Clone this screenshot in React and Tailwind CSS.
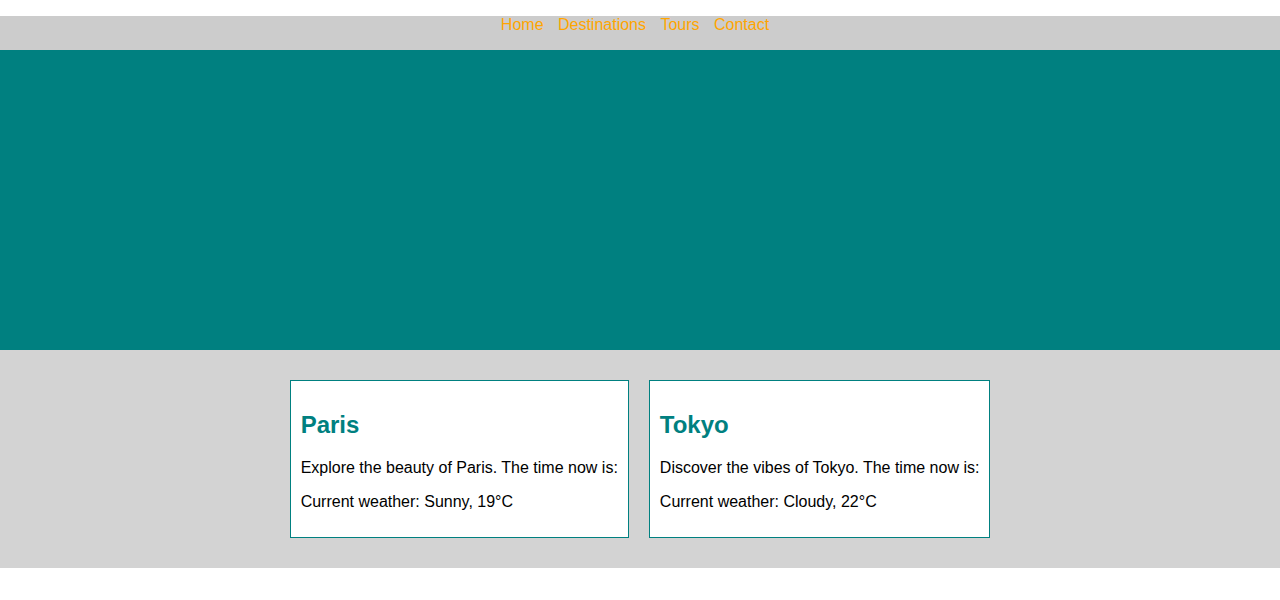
export default function App() {
  const links = ["Home", "Destinations", "Tours", "Contact"];
  const cards = [
    { city: "Paris", text: "Explore the beauty of Paris. The time now is:", weather: "Current weather: Sunny, 19°C" },
    { city: "Tokyo", text: "Discover the vibes of Tokyo. The time now is:", weather: "Current weather: Cloudy, 22°C" },
  ];
  return (
    <div className="bg-white min-h-[600px] text-black" style={{ fontFamily: '"Liberation Sans", Arial, sans-serif' }}>
      <header className="pt-4">
        <nav className="bg-[#cccccc] h-[34px]">
          <ul className="flex justify-center gap-[4.45px] text-[16px] leading-[18.4px]">
            {links.map((l) => (
              <li key={l} className="mr-[10px]">
                <a className="text-[#ffa500]" href="#">{l}</a>
              </li>
            ))}
          </ul>
        </nav>
      </header>
      <div className="bg-[#008080] h-[300px]" />
      <section className="bg-[#d3d3d3] p-[30px] flex justify-center items-start gap-5">
        {cards.map((c) => (
          <div key={c.city} className="bg-white border border-[#008080] p-[10px]">
            <h2 className="text-[24px] leading-[27.6px] font-bold text-[#008080] mt-[19.92px] mb-[20.9px]">{c.city}</h2>
            <p className="text-[16px] leading-[18.4px] mb-[15px]">{c.text}</p>
            <p className="text-[16px] leading-[18.4px] mb-4">{c.weather}</p>
          </div>
        ))}
      </section>
    </div>
  );
}
